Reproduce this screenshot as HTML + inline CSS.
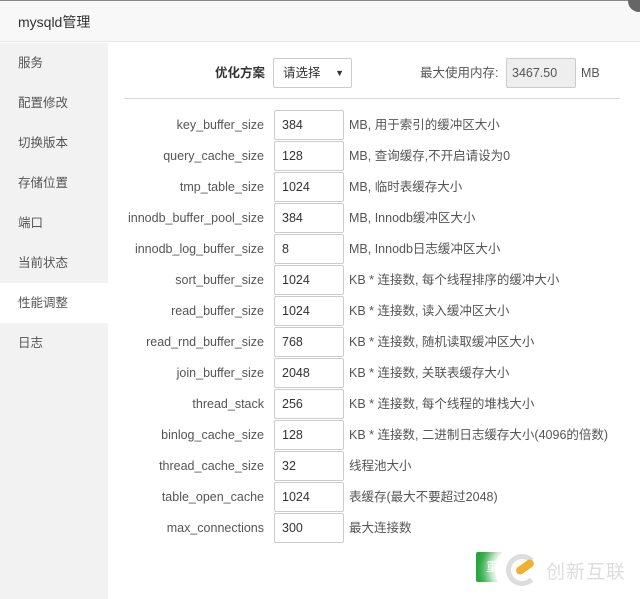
<!DOCTYPE html><html><head><meta charset="utf-8"><style>
*{margin:0;padding:0;box-sizing:border-box}
body{width:640px;height:598px;overflow:hidden;background:#fff;font-family:"Liberation Sans","Noto Sans CJK SC",sans-serif;font-size:12.5px;color:#555;position:relative}
.hd{position:absolute;left:0;top:0;width:640px;height:42px;background:#f8f8f8;border-top:1px solid #888;border-bottom:1px solid #e6e6e6;font-size:14px;color:#333;padding-left:18px;line-height:42px}
.sb{position:absolute;left:0;top:43px;width:108px;height:556px;background:#f2f2f2}
.sb div{height:40px;line-height:40px;padding-left:18px;color:#555;font-size:12.5px}
.sb .on{background:#fff}
.lab,.ds{position:absolute;height:30px;line-height:30px;font-size:12.5px;color:#555;white-space:nowrap}
.lab{width:264px;text-align:right;left:0}
.inp{position:absolute;left:274px;width:70px;height:30px;border:1px solid #ccc;border-radius:2px;padding-left:7px;line-height:28px;color:#333;font-size:12.5px}
.ds{left:349px}
</style></head><body>
<div class="hd">mysqld管理</div>
<div style="position:absolute;right:-10px;top:-10px;width:22px;height:22px;border-radius:50%;background:#666"></div>
<div class="sb"><div>服务</div><div>配置修改</div><div>切换版本</div><div>存储位置</div><div>端口</div><div>当前状态</div><div class="on">性能调整</div><div>日志</div></div>
<div style="position:absolute;left:215px;top:58px;height:30px;line-height:30px;font-weight:bold;color:#333">优化方案</div>
<div style="position:absolute;left:273px;top:58px;width:79px;height:30px;border:1px solid #ccc;border-radius:2px;padding-left:9px;line-height:28px;color:#333">请选择<span style="position:absolute;right:7px;top:0;font-size:9px">▼</span></div>
<div style="position:absolute;left:420px;top:58px;height:30px;line-height:30px;color:#555">最大使用内存:</div>
<div style="position:absolute;left:506px;top:58px;width:70px;height:30px;border:1px solid #ccc;border-radius:2px;background:#eee;padding-left:5px;line-height:28px;color:#555">3467.50</div>
<div style="position:absolute;left:581px;top:58px;height:30px;line-height:30px;color:#555">MB</div>
<div style="position:absolute;left:124px;top:98px;width:496px;height:1px;background:#ddd"></div>
<div id="rows"></div>
<script>
var d=[["key_buffer_size","384","MB, 用于索引的缓冲区大小"],["query_cache_size","128","MB, 查询缓存,不开启请设为0"],["tmp_table_size","1024","MB, 临时表缓存大小"],["innodb_buffer_pool_size","384","MB, Innodb缓冲区大小"],["innodb_log_buffer_size","8","MB, Innodb日志缓冲区大小"],["sort_buffer_size","1024","KB * 连接数, 每个线程排序的缓冲大小"],["read_buffer_size","1024","KB * 连接数, 读入缓冲区大小"],["read_rnd_buffer_size","768","KB * 连接数, 随机读取缓冲区大小"],["join_buffer_size","2048","KB * 连接数, 关联表缓存大小"],["thread_stack","256","KB * 连接数, 每个线程的堆栈大小"],["binlog_cache_size","128","KB * 连接数, 二进制日志缓存大小(4096的倍数)"],["thread_cache_size","32","线程池大小"],["table_open_cache","1024","表缓存(最大不要超过2048)"],["max_connections","300","最大连接数"]];
var h="";d.forEach(function(r,i){var t=110+i*31;h+='<div class="lab" style="top:'+t+'px">'+r[0]+'</div><div class="inp" style="top:'+t+'px">'+r[1]+'</div><div class="ds" style="top:'+t+'px">'+r[2]+'</div>';});
document.getElementById("rows").innerHTML=h;
</script>
<div style="position:absolute;left:476px;top:552px;width:40px;height:30px;background:#20a53a;border-radius:2px;color:#fff;padding-left:10px;line-height:30px">重</div>
<div style="position:absolute;left:495px;top:545px;width:150px;height:50px;background:#fff;border-radius:25px;box-shadow:0 0 12px 8px #fff"></div>
<div style="position:absolute;left:506px;top:554px;width:32px;height:32px;border-radius:50%;border:5px solid #ddd;border-right-color:transparent"></div>
<div style="position:absolute;left:515px;top:563px;width:20px;height:8px;background:#f0b030;transform:rotate(-35deg);border-radius:4px"></div>
<div style="position:absolute;left:546px;top:557px;font-size:19px;color:#ddd;letter-spacing:1px">创新互联</div>
</body></html>
